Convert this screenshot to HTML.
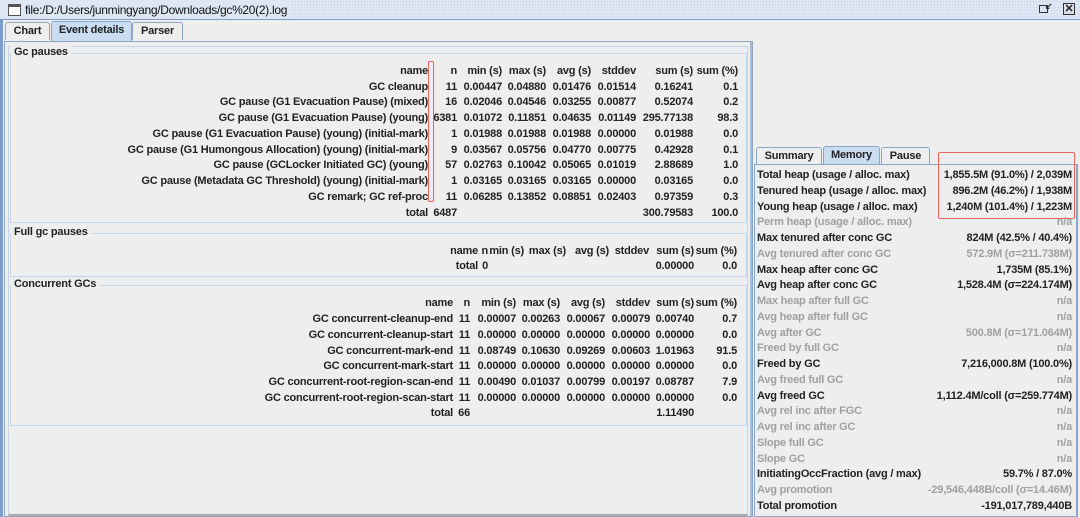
<!DOCTYPE html>
<html><head><meta charset="utf-8"><style>
*{margin:0;padding:0;box-sizing:border-box}
body{width:1080px;height:517px;background:#eeeeee;position:relative;overflow:hidden;font:bold 11px "Liberation Sans",sans-serif;color:#222;letter-spacing:-0.2px}
.a{position:absolute}
.r{position:absolute;white-space:nowrap;line-height:13px}
.g{color:#a0a0a0}
.box{position:absolute;border:1px solid #c4d6ea}
.lg{position:absolute;background:#eeeeee;padding:0 3px;line-height:13px}
.tab{position:absolute;border:1px solid #8da6c6;border-bottom:none;background:#eeeeee;text-align:center;line-height:16px;border-radius:3px 3px 0 0}
.tab.s{background:#c9dcf0}
</style></head><body>
<div class="a" style="left:0;top:0;width:1080px;height:20px;background:#dde6f3;background-image:radial-gradient(#c3d2ea 0.7px,transparent 0.8px);background-size:3px 3px;border-bottom:1px solid #7e9cc9"></div>
<div class="a" style="left:0;top:0;width:290px;height:19px;background:#dde6f3"></div>
<div class="a" style="left:8px;top:4px;width:13px;height:12px;border:1px solid #555;background:#fff;border-top:3px solid #555"></div>
<div class="r" style="left:25px;top:4px;font-weight:normal;font-size:12px;color:#111;letter-spacing:-0.3px">file:/D:/Users/junmingyang/Downloads/gc%20(2).log</div>
<div class="a" style="left:1039px;top:5px;width:9px;height:8px;border:1.5px solid #333"></div>
<div class="r" style="left:1045px;top:0px;font-size:9px">&#8601;</div>
<div class="a" style="left:1063px;top:3px;width:12px;height:12px;border:1px solid #333;background:#dde;text-align:center;line-height:10px;font-size:11px">&#x2715;</div>
<div class="a" style="left:0;top:20px;width:3px;height:497px;background:#7e9cc9"></div>
<div class="tab" style="left:5px;top:22px;width:45px;height:18px">Chart</div>
<div class="tab s" style="left:51px;top:21px;width:81px;height:20px">Event details</div>
<div class="tab" style="left:132px;top:22px;width:51px;height:18px">Parser</div>
<div class="a" style="left:4px;top:41px;width:749px;height:476px;border:1px solid #8da6c6;border-right:3px solid #a9bcd6"></div>
<div class="a" style="left:8px;top:46px;width:740px;height:470px;border:1px solid #c4d6ea;border-bottom:2px solid #aaa"></div>
<div class="box" style="left:10px;top:53px;width:737px;height:170px"></div>
<div class="lg" style="left:11px;top:46px">Gc pauses</div>
<div class="box" style="left:10px;top:233px;width:737px;height:44px"></div>
<div class="lg" style="left:11px;top:226px">Full gc pauses</div>
<div class="box" style="left:10px;top:285px;width:737px;height:141px"></div>
<div class="lg" style="left:11px;top:278px">Concurrent GCs</div>
<div id="t1"></div>
<div class="a" style="left:752px;top:41px;width:1px;height:476px;background:#8da6c6"></div>
<div class="tab" style="left:756px;top:147px;width:66px;height:17px">Summary</div>
<div class="tab s" style="left:823px;top:146px;width:57px;height:18px">Memory</div>
<div class="tab" style="left:881px;top:147px;width:49px;height:17px">Pause</div>
<div class="a" style="left:754px;top:164px;width:324px;height:353px;border:1px solid #8da6c6;border-right:2px solid #8da6c6"></div>
<div class="a" style="left:428px;top:61px;width:6px;height:141px;border:1px solid #f06060;border-radius:2px"></div>
<div class="a" style="left:938px;top:152px;width:137px;height:67px;border:1px solid #f06060;border-radius:2px"></div>
<script>
function rows(tops,cols,data,cls){let h='';data.forEach((row,i)=>{row.forEach((t,j)=>{if(t!=='')h+=`<div class="r ${cls||''}" style="right:${1080-cols[j]}px;top:${tops[i]}px">${t}</div>`;});});return h;}
let o='';
const c1=[428,457,502,546,591,636,693,738];
const d1=[["name","n","min (s)","max (s)","avg (s)","stddev","sum (s)","sum (%)"],
["GC cleanup","11","0.00447","0.04880","0.01476","0.01514","0.16241","0.1"],
["GC pause (G1 Evacuation Pause) (mixed)","16","0.02046","0.04546","0.03255","0.00877","0.52074","0.2"],
["GC pause (G1 Evacuation Pause) (young)","6381","0.01072","0.11851","0.04635","0.01149","295.77138","98.3"],
["GC pause (G1 Evacuation Pause) (young) (initial-mark)","1","0.01988","0.01988","0.01988","0.00000","0.01988","0.0"],
["GC pause (G1 Humongous Allocation) (young) (initial-mark)","9","0.03567","0.05756","0.04770","0.00775","0.42928","0.1"],
["GC pause (GCLocker Initiated GC) (young)","57","0.02763","0.10042","0.05065","0.01019","2.88689","1.0"],
["GC pause (Metadata GC Threshold) (young) (initial-mark)","1","0.03165","0.03165","0.03165","0.00000","0.03165","0.0"],
["GC remark; GC ref-proc","11","0.06285","0.13852","0.08851","0.02403","0.97359","0.3"],
["total","6487","","","","","300.79583","100.0"]];
o+=rows([65,81,96,112,128,144,159,175,191,207],c1,d1);
const c2=[478,488,524,566,609,649,694,737];
o+=rows([245,260],c2,[["name","n","min (s)","max (s)","avg (s)","stddev","sum (s)","sum (%)"],["total","0","","","","","0.00000","0.0"]]);
const c3=[453,470,516,560,605,650,694,737];
const d3=[["name","n","min (s)","max (s)","avg (s)","stddev","sum (s)","sum (%)"],
["GC concurrent-cleanup-end","11","0.00007","0.00263","0.00067","0.00079","0.00740","0.7"],
["GC concurrent-cleanup-start","11","0.00000","0.00000","0.00000","0.00000","0.00000","0.0"],
["GC concurrent-mark-end","11","0.08749","0.10630","0.09269","0.00603","1.01963","91.5"],
["GC concurrent-mark-start","11","0.00000","0.00000","0.00000","0.00000","0.00000","0.0"],
["GC concurrent-root-region-scan-end","11","0.00490","0.01037","0.00799","0.00197","0.08787","7.9"],
["GC concurrent-root-region-scan-start","11","0.00000","0.00000","0.00000","0.00000","0.00000","0.0"],
["total","66","","","","","1.11490",""]];
o+=rows([297,313,329,345,360,376,392,407],c3,d3);
const m=[["Total heap (usage / alloc. max)","1,855.5M (91.0%) / 2,039M",0],
["Tenured heap (usage / alloc. max)","896.2M (46.2%) / 1,938M",0],
["Young heap (usage / alloc. max)","1,240M (101.4%) / 1,223M",0],
["Perm heap (usage / alloc. max)","n/a",1],
["Max tenured after conc GC","824M (42.5% / 40.4%)",0],
["Avg tenured after conc GC","572.9M (&sigma;=211.738M)",1],
["Max heap after conc GC","1,735M (85.1%)",0],
["Avg heap after conc GC","1,528.4M (&sigma;=224.174M)",0],
["Max heap after full GC","n/a",1],
["Avg heap after full GC","n/a",1],
["Avg after GC","500.8M (&sigma;=171.064M)",1],
["Freed by full GC","n/a",1],
["Freed by GC","7,216,000.8M (100.0%)",0],
["Avg freed full GC","n/a",1],
["Avg freed GC","1,112.4M/coll (&sigma;=259.774M)",0],
["Avg rel inc after FGC","n/a",1],
["Avg rel inc after GC","n/a",1],
["Slope full GC","n/a",1],
["Slope GC","n/a",1],
["InitiatingOccFraction (avg / max)","59.7% / 87.0%",0],
["Avg promotion","-29,546,448B/coll (&sigma;=14.46M)",1],
["Total promotion","-191,017,789,440B",0]];
m.forEach((x,i)=>{const t=169+i*15.75;const c=x[2]?'g':'';o+=`<div class="r ${c}" style="left:757px;top:${t}px">${x[0]}</div><div class="r ${c}" style="right:8px;top:${t}px">${x[1]}</div>`;});
document.getElementById('t1').outerHTML=o;
</script>
</body></html>
